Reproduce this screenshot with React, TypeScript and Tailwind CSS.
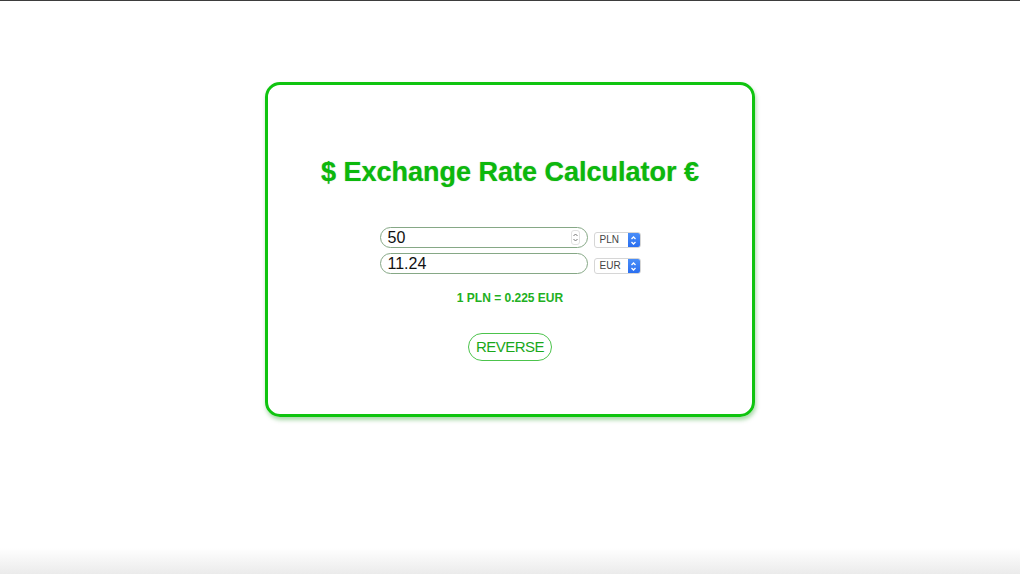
export default function App() {
  return (
    <div className="flex h-[574px] w-full flex-col overflow-hidden bg-white font-['Liberation_Sans',Arial,sans-serif]">
      <div className="h-px w-full shrink-0 bg-[#3d3d3d]" />
      <main className="flex flex-1 justify-center pt-[81px]">
        <Calculator />
      </main>
      <div className="h-[26px] w-full shrink-0 bg-gradient-to-b from-white to-[#ebebeb]" />
    </div>
  );
}

function Calculator() {
  return (
    <section className="flex h-[335px] w-[490px] flex-col items-center rounded-[15px] border-[3px] border-[#0fc40f] pt-[72px] shadow-[1px_3px_4px_rgba(0,140,0,0.35)]">
      <h1 className="text-[27px] leading-[30px] font-bold text-[#0cb80c] [text-shadow:0_0_1px_rgba(0,120,0,0.5)]">
        $ Exchange Rate Calculator €
      </h1>

      <div className="mt-[40px] flex flex-col gap-[5px]">
        <AmountRow value="50" currency="PLN" spinner />
        <AmountRow value="11.24" currency="EUR" />
      </div>

      <p className="mt-[17px] text-[12px] leading-[14px] font-bold text-[#22b022]">
        1 PLN = 0.225 EUR
      </p>

      <button className="mt-[28px] flex h-[28px] w-[84px] items-center justify-center rounded-full border border-[#4cc34c] text-[15px] tracking-[-0.5px] text-[#1aa81a]">
        REVERSE
      </button>
    </section>
  );
}

function AmountRow({
  value,
  currency,
  spinner,
}: {
  value: string;
  currency: string;
  spinner?: boolean;
}) {
  return (
    <div className="flex items-end gap-[6px]">
      <div className="flex h-[21px] w-[208px] items-center rounded-full border border-[#86a886] pl-[7px] pr-[7px]">
        <span className="flex-1 text-[16px] leading-none text-[#111]">{value}</span>
        {spinner ? (
          <span className="flex h-[15px] w-[9px] items-center justify-center rounded-[3px] border border-[#e2e2e2]">
            <svg width="7" height="11" viewBox="0 0 7 11" fill="none" stroke="#777" strokeWidth="1">
              <path d="M1.5 4 L3.5 2 L5.5 4" />
              <path d="M1.5 7 L3.5 9 L5.5 7" />
            </svg>
          </span>
        ) : null}
      </div>
      <div className="flex h-[16px] w-[47px] items-stretch overflow-hidden rounded-[3px] border border-[#d6d6d6] bg-white">
        <span className="flex flex-1 items-center pl-[5px] text-[10px] leading-none text-[#444]">
          {currency}
        </span>
        <span className="flex w-[12px] items-center justify-center bg-gradient-to-b from-[#4a8ef8] to-[#2a6ef0]">
          <svg width="7" height="11" viewBox="0 0 7 11" fill="none" stroke="white" strokeWidth="1.3">
            <path d="M1.5 4 L3.5 2 L5.5 4" />
            <path d="M1.5 7 L3.5 9 L5.5 7" />
          </svg>
        </span>
      </div>
    </div>
  );
}
